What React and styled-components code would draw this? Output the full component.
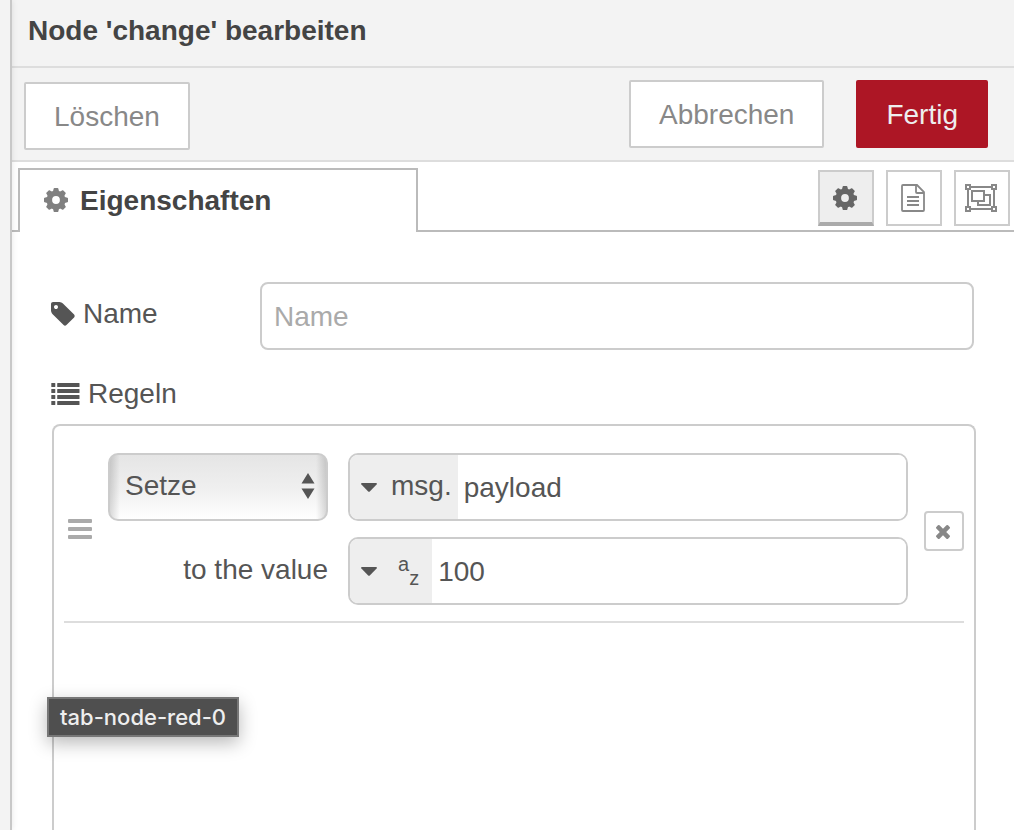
import { useState } from 'react'
import styled, { createGlobalStyle } from 'styled-components'

const GlobalStyle = createGlobalStyle`
  * {
    box-sizing: border-box;
  }
  body {
    margin: 0;
    background-color: #fff;
    color: #555;
    font-family: "Liberation Sans", Helvetica, Arial, sans-serif;
    font-size: 28px;
    line-height: 36px;
  }
  button, input, select {
    margin: 0;
    font: inherit;
    color: inherit;
    outline: none;
  }
  button {
    cursor: pointer;
  }
  svg {
    display: block;
    flex-shrink: 0;
  }
`
const Page = styled.div`
  display: flex;
  min-height: 100vh;
  overflow: hidden;
`
const Separator = styled.div`
  position: relative;
  z-index: 1;
  flex: 0 0 12px;
  background-color: #f3f3f3;
  border-right: 2px solid #c8c8c8;
  box-shadow: 0 0 6px rgba(0, 0, 0, 0.1);
`
const Tray = styled.main`
  flex: 1;
  min-width: 0;
  display: flex;
  flex-direction: column;
`
const TrayHeader = styled.h1`
  margin: 0;
  padding: 13px 16px 17px;
  background-color: #f3f3f3;
  border-bottom: 2px solid #ddd;
  color: #444;
  font-size: 28px;
  font-weight: 700;
`
const Toolbar = styled.div`
  display: flex;
  justify-content: space-between;
  padding: 12px 26px 10px 12px;
  background-color: #f3f3f3;
  border-bottom: 2px solid #ddd;
`
const ToolbarGroup = styled.div`
  display: flex;
  gap: 32px;
  padding-top: ${({ $low }) => ($low ? '2px' : '0')};
  padding-bottom: ${({ $low }) => ($low ? '0' : '2px')};
`
const ToolbarButton = styled.button`
  height: 68px;
  padding: 2px 28px 0;
  border: 2px solid ${({ $primary }) => ($primary ? '#ad1625' : '#ccc')};
  border-radius: 2px;
  background-color: ${({ $primary }) => ($primary ? '#ad1625' : '#fff')};
  color: ${({ $primary }) => ($primary ? '#eee' : '#888')};
`
const TabBar = styled.div`
  display: flex;
  justify-content: space-between;
  padding: 6px 4px 0 6px;
  border-bottom: 2px solid #bbb;
`
const Tab = styled.button`
  display: flex;
  align-items: center;
  gap: 12px;
  width: 400px;
  height: 64px;
  margin-bottom: -2px;
  padding: 0 24px;
  border: 2px solid #bbb;
  border-bottom: 0;
  background-color: #fff;
  color: #444;
  font-weight: 700;
`
const TabIcon = styled.span`
  padding-bottom: 2px;
  color: #808080;
`
const TabButtons = styled.div`
  display: flex;
  gap: 12px;
  padding-top: 2px;
`
const TabButton = styled.button`
  display: flex;
  align-items: center;
  justify-content: center;
  width: 56px;
  height: 56px;
  padding: 0 2px 0 0;
  border: 2px solid #ccc;
  background-color: #fff;
  color: #888;
  ${({ $active }) => $active && `
    padding-top: 2px;
    border-bottom: 4px solid #aaa;
    background-color: #eee;
    color: #666;
  `}
`
const Form = styled.form`
  flex: 1;
  display: flex;
  flex-direction: column;
  padding: 50px 38px 0 39px;
`
const FormRow = styled.div`
  display: flex;
  align-items: center;
  padding-right: 2px;
`
const Label = styled.label`
  display: flex;
  align-items: center;
  gap: 8px;
  width: 209px;
  padding-bottom: 4px;
`
const TextInput = styled.input`
  flex: 1;
  min-width: 0;
  height: 68px;
  padding: 2px 12px 0;
  border: 2px solid #ccc;
  border-radius: 8px;
  background-color: #fff;
  &::placeholder {
    color: #aaa;
    opacity: 1;
  }
`
const ListLabel = styled.div`
  display: flex;
  align-items: center;
  gap: 8px;
  padding: 26px 0 12px;
`
const RuleList = styled.ol`
  flex: 1;
  margin: 0 0 0 1px;
  padding: 0 10px;
  border: 2px solid #ccc;
  border-bottom: 0;
  border-radius: 8px 8px 0 0;
  list-style: none;
`
const Rule = styled.li`
  display: flex;
  align-items: center;
  padding: 27px 0 16px;
  border-bottom: 2px solid #ddd;
`
const Handle = styled.span`
  display: flex;
  justify-content: center;
  width: 32px;
  margin-right: 12px;
  color: #aaa;
  cursor: move;
`
const RuleFields = styled.div`
  flex: 1;
  min-width: 0;
  display: grid;
  grid-template-columns: 220px 1fr;
  gap: 16px 20px;
  align-items: center;
`
const SelectBox = styled.div`
  position: relative;
`
const SelectArrows = styled.svg`
  position: absolute;
  top: 20px;
  right: 13px;
  pointer-events: none;
`
const Select = styled.select`
  display: block;
  width: 100%;
  height: 68px;
  padding: 0 40px 2px 15px;
  appearance: none;
  border: 2px solid #ccc;
  border-radius: 10px;
  background-image:
    linear-gradient(to right, rgba(0, 0, 0, 0.14), transparent 10px, transparent calc(100% - 10px), rgba(0, 0, 0, 0.14)),
    linear-gradient(#e5e5e5, #efefef 50%, #fff);
`
const ValueLabel = styled.label`
  padding-bottom: 2px;
  text-align: right;
`
const TypedInput = styled.div`
  display: flex;
  height: 68px;
  border: 2px solid #ccc;
  border-radius: 10px;
  overflow: hidden;
`
const TypeButton = styled.button`
  display: flex;
  align-items: center;
  gap: 14px;
  padding: 0 6px 0 11px;
  border: 0;
  background-color: #eee;
`
const TypeName = styled.span`
  padding-bottom: 2px;
`
const StringType = styled.span`
  display: flex;
  height: 34px;
  padding: 0 7px;
  font-size: 20px;
  line-height: 20px;
`
const StringLetter = styled.span`
  align-self: ${({ $low }) => ($low ? 'flex-end' : 'flex-start')};
`
const TypedValue = styled.input`
  flex: 1;
  min-width: 0;
  padding: 2px 6px 0;
  border: 0;
  background-color: #fff;
`
const DeleteButton = styled.button`
  display: flex;
  align-items: center;
  justify-content: center;
  width: 40px;
  height: 40px;
  margin: 4px 0 0 16px;
  padding: 2px 2px 0 0;
  border: 2px solid #ccc;
  border-radius: 4px;
  background-color: #fff;
  color: #888;
`
const Tooltip = styled.div`
  position: absolute;
  top: 697px;
  left: 47px;
  z-index: 10;
  padding: 0 11px;
  border: 2px solid #777;
  background-color: #4f4f4f;
  box-shadow: 0 6px 18px rgba(0, 0, 0, 0.28);
  color: #eee;
  font-family: Inter, "Liberation Sans", sans-serif;
  font-size: 22px;
  font-weight: 500;
  line-height: 36px;
  white-space: nowrap;
`

const teeth = [0, 45, 90, 135, 180, 225, 270, 315]

function CogIcon() {
  return (
    <svg width="24" height="24" viewBox="0 0 24 24" fill="currentColor" aria-hidden="true">
      <circle cx="12" cy="12" r="6.700" fill="none" stroke="currentColor" strokeWidth="5.600" />
      {teeth.map(angle => (
        <path
          key={angle}
          d="M8.800 4l0.900-3.400q0.100-0.600 0.700-0.600h3.200q0.600 0 0.700 0.600l0.900 3.400z"
          transform={`rotate(${angle} 12 12)`}
        />
      ))}
    </svg>
  )
}

function TagIcon() {
  return (
    <svg width="24" height="24" viewBox="0 128 1536 1536" fill="currentColor" aria-hidden="true">
      <path d="M448 448q0-53-37.500-90.500t-90.500-37.500-90.500 37.500-37.500 90.500 37.500 90.500 90.500 37.500 90.500-37.500 37.500-90.500zm1067 576q0 53-37 90l-491 492q-39 37-91 37-53 0-90-37l-715-716q-38-37-64.500-101t-26.500-117v-416q0-52 38-90t90-38h416q53 0 117 26.500t102 64.500l715 714q37 39 37 91z" />
    </svg>
  )
}

function ListIcon() {
  return (
    <svg width="29" height="22" viewBox="0 0 29 22" fill="currentColor" aria-hidden="true">
      {[0, 6, 12, 18].map(y => (
        <g key={y}>
          <rect x="0.300" y={y} width="4" height="4" rx="0.600" />
          <rect x="6.200" y={y} width="22.300" height="4" rx="0.600" />
        </g>
      ))}
    </svg>
  )
}

function FileIcon() {
  return (
    <svg width="24" height="28" viewBox="0 0 24 28" fill="none" stroke="currentColor" strokeWidth="2" aria-hidden="true">
      <path d="M2 1h14l7 7v18q0 1-1 1H2q-1 0-1-1V2q0-1 1-1z" strokeWidth="1.800" />
      <path d="M15 1v7q0 1 1 1h7" strokeWidth="1.800" />
      <path d="M6 13h12M6 17h12M6 21h12" />
    </svg>
  )
}

function GroupIcon() {
  return (
    <svg width="32" height="28" viewBox="0 0 32 28" fill="none" stroke="currentColor" strokeWidth="2" aria-hidden="true">
      <path d="M6 3h20M6 25h20M3 6v16M29 6v16" />
      <rect x="1" y="1" width="4" height="4" />
      <rect x="27" y="1" width="4" height="4" />
      <rect x="1" y="23" width="4" height="4" />
      <rect x="27" y="23" width="4" height="4" />
      <rect x="7" y="7" width="12" height="10" />
      <path d="M19 11h6v10H13v-4" />
    </svg>
  )
}

function BarsIcon() {
  return (
    <svg width="24" height="20" viewBox="0 0 24 20" fill="currentColor" aria-hidden="true">
      <rect width="24" height="4" rx="1" />
      <rect y="8" width="24" height="4" rx="1" />
      <rect y="16" width="24" height="4" rx="1" />
    </svg>
  )
}

function CaretIcon() {
  return (
    <svg width="16" height="9" viewBox="0 0 16 9" fill="currentColor" aria-hidden="true">
      <path d="M1 0h14q1.500 0.200 0.600 1.500L8.800 8.400q-0.800 0.700-1.600 0L0.400 1.500Q-0.500 0.200 1 0z" />
    </svg>
  )
}

function RemoveIcon() {
  return (
    <svg width="14" height="14" viewBox="110 366 1188 1188" fill="currentColor" aria-hidden="true">
      <path d="M1298 1322q0 40-28 68l-136 136q-28 28-68 28t-68-28l-294-294-294 294q-28 28-68 28t-68-28l-136-136q-28-28-28-68t28-68l294-294-294-294q-28-28-28-68t28-68l136-136q28-28 68-28t68 28l294 294 294-294q28-28 68-28t68 28l136 136q28 28 28 68t-28 68l-294 294 294 294q28 28 28 68z" />
    </svg>
  )
}

export default function App() {

  const [name, setName] = useState('')
  const [property, setProperty] = useState('payload')
  const [value, setValue] = useState('100')

  return (
    <Page>
      <GlobalStyle />
      <Separator />
      <Tray>
        <TrayHeader>Node &apos;change&apos; bearbeiten</TrayHeader>
        <Toolbar>
          <ToolbarGroup $low>
            <ToolbarButton type="button">Löschen</ToolbarButton>
          </ToolbarGroup>
          <ToolbarGroup>
            <ToolbarButton type="button">Abbrechen</ToolbarButton>
            <ToolbarButton type="button" $primary>Fertig</ToolbarButton>
          </ToolbarGroup>
        </Toolbar>
        <TabBar>
          <Tab type="button">
            <TabIcon><CogIcon /></TabIcon>
            Eigenschaften
          </Tab>
          <TabButtons>
            <TabButton type="button" aria-label="Eigenschaften" $active><CogIcon /></TabButton>
            <TabButton type="button" aria-label="Beschreibung"><FileIcon /></TabButton>
            <TabButton type="button" aria-label="Darstellung"><GroupIcon /></TabButton>
          </TabButtons>
        </TabBar>
        <Form onSubmit={e => e.preventDefault()}>
          <FormRow>
            <Label htmlFor="node-name"><TagIcon />Name</Label>
            <TextInput
              id="node-name"
              type="text"
              placeholder="Name"
              value={name}
              onChange={e => setName(e.target.value)}
            />
          </FormRow>
          <ListLabel id="rules-label"><ListIcon />Regeln</ListLabel>
          <RuleList aria-labelledby="rules-label">
            <Rule>
              <Handle><BarsIcon /></Handle>
              <RuleFields>
                <SelectBox>
                  <Select aria-label="Aktion" defaultValue="set">
                    <option value="set">Setze</option>
                  </Select>
                  <SelectArrows width="14" height="26" viewBox="0 0 14 26" fill="#555" aria-hidden="true">
                    <path d="M7 0l6.500 10.500h-13zM7 26l6.500-10.500h-13z" />
                  </SelectArrows>
                </SelectBox>
                <TypedInput>
                  <TypeButton type="button">
                    <CaretIcon />
                    <TypeName>msg.</TypeName>
                  </TypeButton>
                  <TypedValue
                    type="text"
                    aria-label="Eigenschaft"
                    value={property}
                    onChange={e => setProperty(e.target.value)}
                  />
                </TypedInput>
                <ValueLabel htmlFor="rule-value">to the value</ValueLabel>
                <TypedInput>
                  <TypeButton type="button">
                    <CaretIcon />
                    <StringType>
                      <StringLetter>a</StringLetter>
                      <StringLetter $low>z</StringLetter>
                    </StringType>
                  </TypeButton>
                  <TypedValue
                    id="rule-value"
                    type="text"
                    value={value}
                    onChange={e => setValue(e.target.value)}
                  />
                </TypedInput>
              </RuleFields>
              <DeleteButton type="button" aria-label="Löschen"><RemoveIcon /></DeleteButton>
            </Rule>
          </RuleList>
        </Form>
      </Tray>
      <Tooltip role="tooltip">tab-node-red-0</Tooltip>
    </Page>
  )
}
